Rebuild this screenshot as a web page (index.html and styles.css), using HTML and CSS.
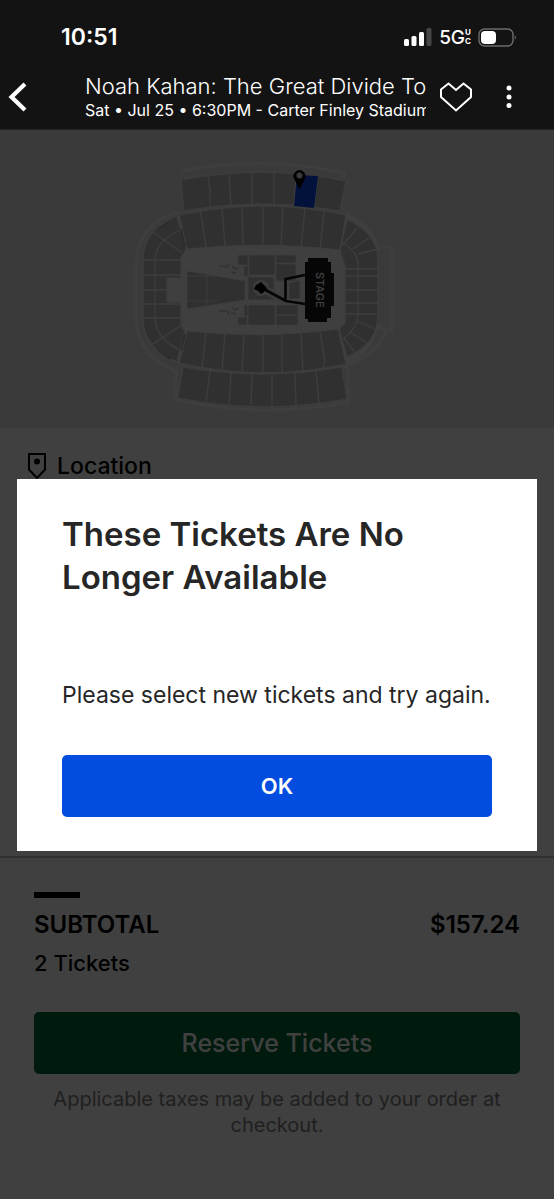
FILE: index.html
```html
<!DOCTYPE html>
<html lang="en">
<head>
<meta charset="utf-8">
<meta name="viewport" content="width=device-width, initial-scale=1">
<title>Noah Kahan: The Great Divide Tour</title>
<link rel="stylesheet" href="styles.css">
</head>
<body>
<div class="app">
  <header class="header">
    <div class="status">
      <span class="status-time">10:51</span>
      <span class="status-icons">
        <svg width="28" height="18" viewBox="0 0 28 18" aria-hidden="true">
          <g fill="#fff"><rect x="0" y="11" width="5" height="7" rx="1.5"/><rect x="7.500" y="8" width="5" height="10" rx="1.500"/><rect x="15" y="4" width="5" height="14" rx="1.500"/></g>
          <rect x="22.500" y="0" width="5" height="18" rx="1.500" fill="#464646"/>
        </svg>
        <span class="network">5G<span class="network-uc"><span>U</span><span>C</span></span></span>
        <svg width="39" height="19" viewBox="0 0 39 19" aria-hidden="true">
          <rect x="1" y="1" width="34" height="17" rx="5.500" fill="none" stroke="#6b6b6b" stroke-width="1.400"/>
          <path d="M36.800 7q2 2.500 0 5z" fill="#777"/>
          <rect x="3" y="3" width="15" height="13" rx="4" fill="#fff"/>
        </svg>
      </span>
    </div>
    <div class="nav">
      <button class="icon-button" type="button" aria-label="Back">
        <svg width="20" height="30" viewBox="0 0 20 30"><path d="M17 2L3.500 15 17 28" fill="none" stroke="#fff" stroke-width="4.200"/></svg>
      </button>
      <div class="event">
        <h1 class="event-title">Noah Kahan: The Great Divide Tour</h1>
        <p class="event-info">Sat • Jul 25 • 6:30PM - Carter Finley Stadium</p>
      </div>
      <button class="icon-button" type="button" aria-label="Favorite">
        <svg width="32" height="30" viewBox="0 0 32 30"><path d="M1 7.500L8.500 1.500 16 8l7.500-6.500L31 7.500V15L16 28.500 1 15z" fill="none" stroke="#fff" stroke-width="2"/></svg>
      </button>
      <button class="icon-button" type="button" aria-label="More options">
        <svg width="6" height="24" viewBox="0 0 6 24" fill="#fff"><circle cx="3" cy="3" r="2.500"/><circle cx="3" cy="12" r="2.500"/><circle cx="3" cy="20.500" r="2.500"/></svg>
      </button>
    </div>
  </header>

  <div class="screen">
    <main class="details">
      <svg class="map" viewBox="0 130 554 298" role="img" aria-label="Seating map">
        <g fill="none" stroke="#f8f8f8" stroke-width="3" stroke-linejoin="round">
          <path d="M181 171Q263 155 345 173L342 178"/>
          <path d="M177 212Q136 226 136 265V315Q136 356 176 371L176 400Q263 419 348 402V370L345 366Q381 352 386 330"/>
          <path d="M346 214Q372 225 378 249L387 246L392 249V331L377 326"/>
        </g>
        <path d="M179 215Q263 197 346 215Q378 228 378 260V316Q378 352 346 365Q263 382 179 364Q143 350 143 318V260Q143 230 179 215Z" fill="#fafafa"/>
        <g fill="#c0c0c0" stroke="#f2f2f2" stroke-width="1.200">
          <path d="M181 180Q263 164 346 181L340 211Q263 197 184 211Z"/>
          <path d="M179 215Q263 197 346 215L340 250Q263 241 187 249Z"/>
          <path d="M187 331Q263 339 338 329L346 364Q263 382 179 363Z"/>
          <path d="M183 367Q263 381 342 367L347 399Q263 415 178 398Z"/>
          <path d="M177 216Q143 230 143 260V318Q143 349 177 362L185 331L181 325V302H167V278H181V258L186 250Z"/>
          <path d="M347 219Q378 234 378 260V314Q378 344 347 357L339 329L345 323V266L340 250Z"/>
        </g>
        <g fill="none" stroke="#f2f2f2" stroke-width="1.300">
          <path d="M208 176L210 190V207M229 174L231 205M252 173V204M274 172V204M296 173L294 205M318 176L314 207"/>
          <path d="M200 211L202 220 206 247M222 209L225 246M242 207L243 246M263 206V245M283 206L281 246M305 208L301 247M324 211L320 249"/>
          <path d="M206 332L202 368M225 334L222 371M244 335L242 373M263 335V374M282 335V373M301 334L303 373M320 332L325 362 323 368"/>
          <path d="M210 371L206 402M231 373L229 405M252 374L251 407M272 374V407M295 373L296 405M316 371L319 403"/>
          <path d="M155 318V260Q155 240 183 229M155 318Q156 341 184 352M143 260H182M143 275H181M143 290H167M143 304H181M143 318H182M153 232L182 253M153 344L183 324"/>
          <path d="M341 243Q358 250 358 265V315Q356 332 340 340M344 269H378M344 276H378M344 290H378M344 303H378M344 314H378M357 228L343 245M369 238L353 249M378 249L358 254M378 330L356 321M367 343L350 332M356 354L344 338"/>
        </g>
        <path d="M158 229l11-7M158 350l12 9M181 229l4 18M185 334l-4 16" stroke="#b0b0b0" stroke-width="2"/>
        <g fill="#c0c0c0" stroke="#eee" stroke-width=".8">
          <path d="M187 271L245 281V300L187 309ZM207 275V306M187 276H217M187 301H217"/>
          <path d="M238 255h10v10h-10zM249 255h26v20h-26zM276 255h20v8h-20zM276 264h20v17h-20zM248 277h26v23h-26zM248 305h27v20h-27zM276 305h22v10h-22zM276 315h22v10h-22zM238 317h9v8h-9zM244 266h4v10h-4zM244 305h4v11h-4z"/>
          <path d="M289 283L300 280V299H289Z"/>
        </g>
        <path d="M262 288L285 300" stroke="#f0f0f0" stroke-width="8"/>
        <circle cx="261" cy="288" r="8" fill="#f0f0f0"/>
        <path d="M219 266l8 1 2-3m3 2l3 3 4-1m-8 4l5 1M219 311l8 0 2 3m3-7l3 3 4-2m-8 5l5 1" fill="none" stroke="#c4c4c4" stroke-width="1.500"/>
        <path d="M305 275L285.500 279V301L305 304M262 288L286 301" fill="none" stroke="#151515" stroke-width="2.600"/>
        <path d="M261 282l3 3 3 3-3 4-3 2-3-3-4-2 2-4 2-1z" fill="#000"/>
        <path d="M308 258h20v4h3v11h3v33h-3v12h-4v4h-19v-3h-3v-57h3z" fill="#181818"/>
        <text class="stage-label" transform="translate(316 272) rotate(90)">STAGE</text>
        <path d="M297 175L318 176L314 208L294 206Z" fill="#0a48f0"/>
        <path d="M299.500 188.500L295 179.500A5.600 5.600 0 1 1 304 179.500Z" fill="#000" stroke="#000" stroke-linejoin="round"/>
        <circle cx="299.500" cy="175.500" r="3" fill="#e8e8e8"/>
      </svg>
      <h2 class="location">
        <svg width="20" height="28" viewBox="0 0 20 28" aria-hidden="true"><path d="M2 2h16v15.500L10 26 2 17.500z" fill="none" stroke="#000" stroke-width="2"/><circle cx="10" cy="9.500" r="3" fill="#000"/></svg>
        Location
      </h2>
    </main>
    <footer class="summary">
      <div class="summary-bar"></div>
      <div class="summary-row"><span>SUBTOTAL</span><span>$157.24</span></div>
      <p class="summary-count">2 Tickets</p>
      <button class="reserve" type="button">Reserve Tickets</button>
      <p class="summary-note">Applicable taxes may be added to your order at checkout.</p>
    </footer>
    <div class="overlay">
      <section class="dialog" role="alertdialog" aria-modal="true" aria-labelledby="dialog-title" aria-describedby="dialog-text">
        <h2 class="dialog-title" id="dialog-title">These Tickets Are No Longer Available</h2>
        <p class="dialog-text" id="dialog-text">Please select new tickets and try again.</p>
        <button class="dialog-ok" type="button">OK</button>
      </section>
    </div>
  </div>
</div>
</body>
</html>
```
FILE: styles.css
```css
* { box-sizing: border-box; }
body, h1, h2, p { margin: 0; }
body {
  background: #131313;
  color: #000;
  font-family: Inter, "Open Sans", sans-serif;
}
button {
  border: 0;
  padding: 0;
  font-family: inherit;
  cursor: pointer;
}
svg { display: block; flex: none; }

.app {
  display: flex;
  flex-direction: column;
  min-height: 100vh;
}

.header {
  background: #131313;
  color: #fff;
  padding: 23px 37px 8px 8px;
  border-bottom: 1px solid #242424;
}
.status {
  display: flex;
  align-items: center;
  justify-content: space-between;
  height: 28px;
  padding-left: 53px;
}
.status-time { font-size: 23px; font-weight: 600; }
.status-icons { display: flex; align-items: center; gap: 7px; }
.network {
  display: flex;
  align-items: center;
  font-size: 19px;
  font-weight: 500;
}
.network-uc {
  display: flex;
  flex-direction: column;
  font-size: 8px;
  font-weight: 700;
  line-height: 9px;
}
.nav {
  display: flex;
  align-items: center;
  padding: 22px 5px 0 0;
}
.icon-button { background: none; flex: none; }
.event {
  flex: 1;
  min-width: 0;
  margin: 0 14px 0 57px;
  overflow: hidden;
  white-space: nowrap;
}
.event-title { font-size: 22px; font-weight: 300; line-height: 26px; }
.event-info { font-size: 16px; line-height: 22px; }
.event + .icon-button { margin-right: 34px; }

.screen {
  position: relative;
  flex: 1;
  display: flex;
  flex-direction: column;
  background: #fff;
}
.details { flex: 1; }
.map { width: 100%; background: #e8e8e8; }
.stage-label { font: 500 11px Inter, sans-serif; fill: #fff; }
.location {
  display: flex;
  align-items: center;
  gap: 10px;
  padding: 24px 27px;
  font-size: 23px;
  font-weight: 500;
  line-height: 28px;
}

.summary {
  border-top: 2px solid #bbb;
  padding: 34px 34px 61px;
}
.summary-bar { width: 46px; height: 6px; background: #000; }
.summary-row {
  display: flex;
  justify-content: space-between;
  padding-top: 10px;
  font-size: 24px;
  font-weight: 600;
  line-height: 34px;
}
.summary-count {
  padding-top: 6px;
  font-size: 22px;
  font-weight: 500;
  line-height: 30px;
}
.reserve {
  display: block;
  width: 100%;
  height: 62px;
  margin-top: 34px;
  border-radius: 5px;
  background: #00683a;
  color: #fff;
  font-size: 25px;
  font-weight: 500;
}
.summary-note {
  padding-top: 12px;
  color: #808080;
  font-size: 20px;
  line-height: 26px;
  text-align: center;
}

.overlay {
  position: absolute;
  inset: 0;
  display: flex;
  align-items: center;
  padding: 0 17px;
  background: rgba(0, 0, 0, .75);
}
.dialog {
  width: 100%;
  padding: 34px 45px;
  background: #fff;
  color: #262626;
}
.dialog-title { font-size: 33px; font-weight: 600; line-height: 43px; }
.dialog-text {
  padding: 80px 0 44px;
  font-size: 23px;
  line-height: 32px;
}
.dialog-ok {
  display: block;
  width: 100%;
  height: 62px;
  border-radius: 5px;
  background: #024ddf;
  color: #fff;
  font-size: 22px;
  font-weight: 600;
}
```
